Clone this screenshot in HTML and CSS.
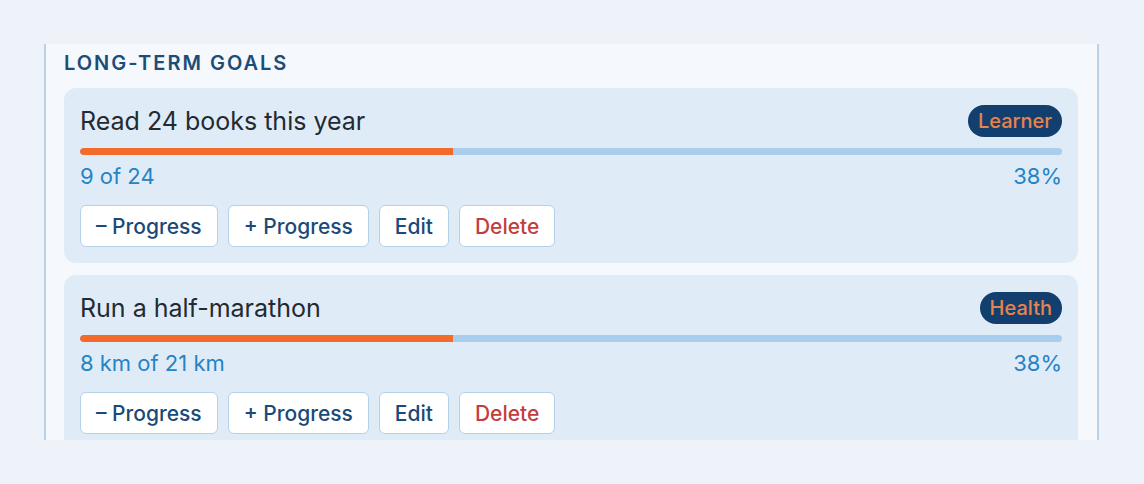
FILE: index.html
```html
<!DOCTYPE html>
<html>
<head>
<meta charset="utf-8">
<link rel="stylesheet" href="styles.css">
</head>
<body>
<div class="page">
  <section class="panel">
    <h2 class="panel-title">LONG-TERM GOALS</h2>
    <div class="goal-list">
      <div class="goal">
        <div class="goal-head">
          <span class="goal-name">Read 24 books this year</span>
          <span class="badge">Learner</span>
        </div>
        <div class="bar"><div class="fill" style="width:38%"></div></div>
        <div class="meta"><span>9 of 24</span><span>38%</span></div>
        <div class="actions">
          <button class="btn">– Progress</button>
          <button class="btn">+ Progress</button>
          <button class="btn">Edit</button>
          <button class="btn danger">Delete</button>
        </div>
      </div>
      <div class="goal">
        <div class="goal-head">
          <span class="goal-name">Run a half-marathon</span>
          <span class="badge">Health</span>
        </div>
        <div class="bar"><div class="fill" style="width:38%"></div></div>
        <div class="meta"><span>8 km of 21 km</span><span>38%</span></div>
        <div class="actions">
          <button class="btn">– Progress</button>
          <button class="btn">+ Progress</button>
          <button class="btn">Edit</button>
          <button class="btn danger">Delete</button>
        </div>
      </div>
    </div>
  </section>
</div>
</body>
</html>
```

FILE: styles.css
```css
* { box-sizing: border-box; }
html, body { margin: 0; padding: 0; }
body {
  background: #eef2f9;
  font-family: Inter, "DejaVu Sans", sans-serif;
  width: 1144px;
  height: 484px;
  overflow: hidden;
}
.page {
  padding: 44px 45px 0 44px;
}
.panel {
  background: #f5f8fc;
  border-left: 2px solid #b7d2e9;
  border-right: 2px solid #b7d2e9;
  height: 396px;
  overflow: hidden;
  padding: 7px 19px 0 18px;
}
.panel-title {
  margin: 0;
  font-size: 20px;
  font-weight: 600;
  letter-spacing: 2px;
  color: #1c4c78;
  line-height: 24px;
  height: 37px;
}
.goal-list {
  display: flex;
  flex-direction: column;
  gap: 12px;
}
.goal {
  background: #dfecf8;
  border-radius: 12px;
  padding: 16px;
}
.goal-head {
  display: flex;
  justify-content: space-between;
  align-items: center;
  height: 33px;
}
.goal-name {
  font-size: 25px;
  color: #232a31;
  font-weight: 400;
}
.badge {
  background: #123f6e;
  color: #e9834d;
  font-size: 20px;
  font-weight: 500;
  border-radius: 16px;
  height: 32px;
  line-height: 32px;
  padding: 0 10px;
}
.bar {
  margin-top: 11px;
  height: 7px;
  border-radius: 4px;
  background: #a9cdec;
  overflow: hidden;
}
.fill {
  height: 100%;
  background: #f26b2b;
  border-radius: 4px 0 0 4px;
}
.meta {
  display: flex;
  justify-content: space-between;
  font-size: 22px;
  color: #2583c6;
  line-height: 26px;
  margin-top: 8px;
}
.actions {
  display: flex;
  gap: 10px;
  margin-top: 16px;
}
.btn {
  font-family: inherit;
  background: #ffffff;
  border: 1px solid #b6d0e6;
  border-radius: 6px;
  height: 42px;
  padding: 0 15px;
  font-size: 21px;
  color: #1a4a78;
  font-weight: 500;
}
.btn.danger { color: #c43d3d; }
```
